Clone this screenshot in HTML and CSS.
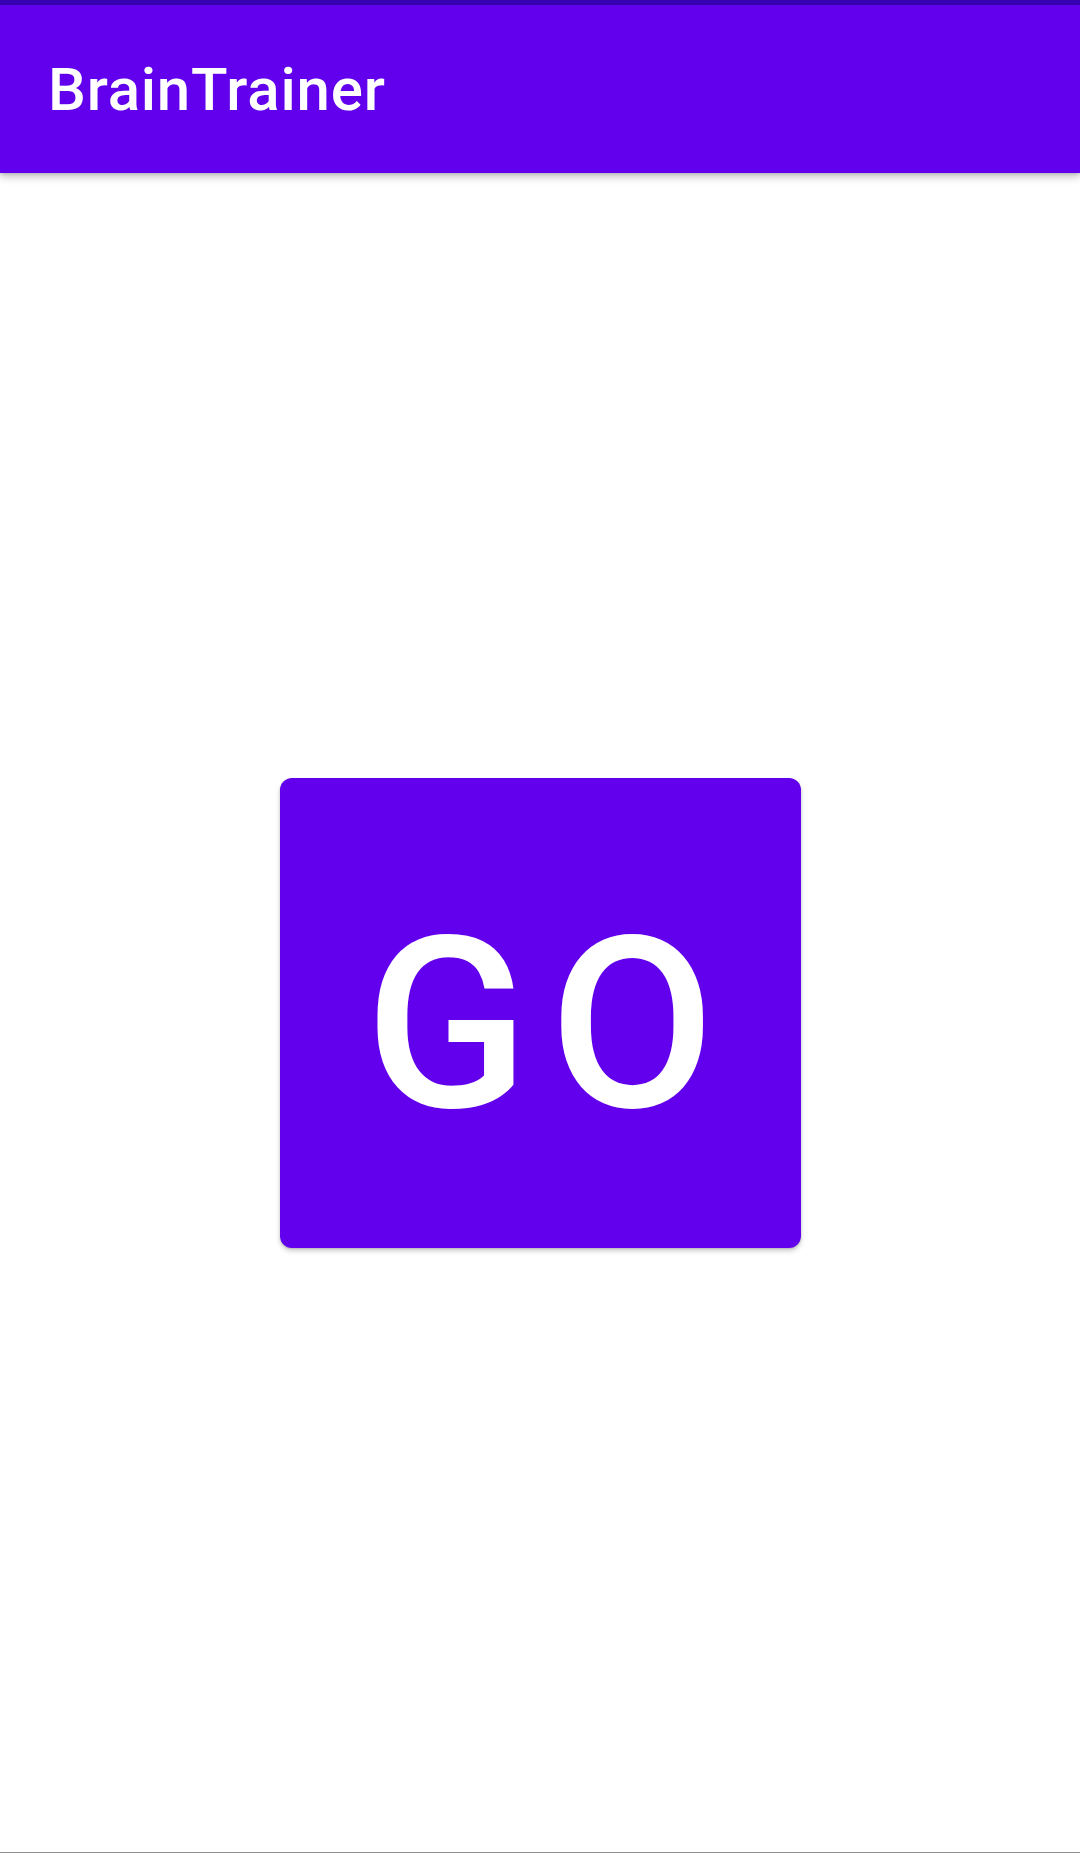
FILE: index.html
```html
<!DOCTYPE html>
<html>
<head>
<meta charset="utf-8">
<link rel="stylesheet" href="styles.css">
</head>
<body>
<div class="screen">
  <div class="status"></div>
  <header class="appbar"><h1 class="title">BrainTrainer</h1></header>
  <main class="content">
    <button class="go">GO</button>
  </main>
  <div class="navline"></div>
</div>
</body>
</html>
```
FILE: styles.css
```css
html, body {
  margin: 0;
  padding: 0;
  background: #ffffff;
}
.screen {
  width: 1080px;
  height: 1853px;
  display: flex;
  flex-direction: column;
  font-family: Roboto, "Liberation Sans", sans-serif;
  overflow: hidden;
}
.status {
  height: 5px;
  background: #3700b3;
  flex: none;
}
.appbar {
  height: 168px;
  flex: none;
  background: #6200ee;
  display: flex;
  align-items: center;
  padding-left: 48px;
  box-shadow: 0 4px 8px rgba(0, 0, 0, 0.22), 0 1px 3px rgba(0, 0, 0, 0.15);
  position: relative;
  z-index: 1;
}
.title {
  margin: 0;
  color: #ffffff;
  font-size: 60px;
  font-weight: 500;
  letter-spacing: 0.8px;
}
.content {
  flex: 1;
  display: flex;
  align-items: center;
  justify-content: center;
}
.go {
  width: 521px;
  height: 470px;
  border: none;
  border-radius: 12px;
  background: #6200ee;
  color: #ffffff;
  font-family: Roboto, "Liberation Sans", sans-serif;
  font-size: 240px;
  font-weight: 500;
  letter-spacing: 21px;
  padding: 24px 0 0 21px;
  line-height: 1;
  box-shadow: 0 3px 5px rgba(0, 0, 0, 0.2), 0 1px 2px rgba(0, 0, 0, 0.12);
}
.navline {
  height: 1px;
  flex: none;
  background: #8f8f8f;
}
```
